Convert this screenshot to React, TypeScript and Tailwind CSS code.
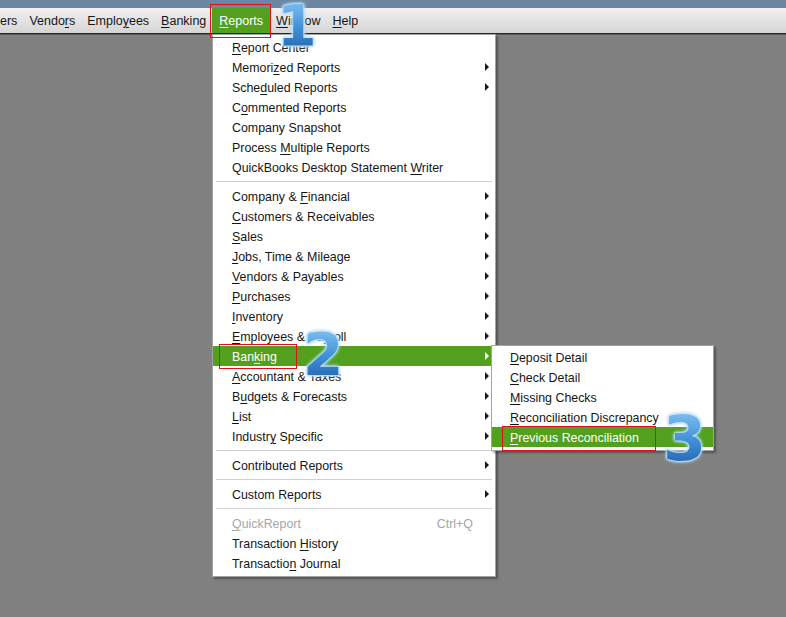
import React from 'react';

type Item =
  | { kind: 'item'; label: string; sub?: boolean; active?: boolean; disabled?: boolean; shortcut?: string }
  | { kind: 'sep' };

// "^" marks the mnemonic letter that gets underlined
const menuItems: Item[] = [
  { kind: 'item', label: '^Report Center' },
  { kind: 'item', label: 'Memori^zed Reports', sub: true },
  { kind: 'item', label: 'Sche^duled Reports', sub: true },
  { kind: 'item', label: 'C^ommented Reports' },
  { kind: 'item', label: 'Company Snapshot' },
  { kind: 'item', label: 'Process ^Multiple Reports' },
  { kind: 'item', label: 'QuickBooks Desktop Statement ^Writer' },
  { kind: 'sep' },
  { kind: 'item', label: 'Company & ^Financial', sub: true },
  { kind: 'item', label: '^Customers & Receivables', sub: true },
  { kind: 'item', label: '^Sales', sub: true },
  { kind: 'item', label: '^Jobs, Time & Mileage', sub: true },
  { kind: 'item', label: '^Vendors & Payables', sub: true },
  { kind: 'item', label: '^Purchases', sub: true },
  { kind: 'item', label: '^Inventory', sub: true },
  { kind: 'item', label: '^Employees & Payroll', sub: true },
  { kind: 'item', label: 'Ban^king', sub: true, active: true },
  { kind: 'item', label: '^Accountant & Taxes', sub: true },
  { kind: 'item', label: 'B^udgets & Forecasts', sub: true },
  { kind: 'item', label: '^List', sub: true },
  { kind: 'item', label: 'Industr^y Specific', sub: true },
  { kind: 'sep' },
  { kind: 'item', label: 'Contributed Reports', sub: true },
  { kind: 'sep' },
  { kind: 'item', label: 'Custom Reports', sub: true },
  { kind: 'sep' },
  { kind: 'item', label: '^QuickReport', disabled: true, shortcut: 'Ctrl+Q' },
  { kind: 'item', label: 'Transaction ^History' },
  { kind: 'item', label: 'Transactio^n Journal' },
];

const bankingItems = [
  { label: '^Deposit Detail' },
  { label: '^Check Detail' },
  { label: '^Missing Checks' },
  { label: '^Reconciliation Discrepancy' },
  { label: '^Previous Reconciliation', active: true },
];

const menuBar = [
  { label: 'ers' },
  { label: 'Vendo^rs' },
  { label: 'Emplo^yees' },
  { label: '^Banking' },
  { label: '^Reports', active: true },
  { label: '^Window' },
  { label: '^Help' },
];

function Label({ text }: { text: string }) {
  const i = text.indexOf('^');
  if (i < 0) return <span>{text}</span>;
  return (
    <span>
      {text.slice(0, i)}
      <span className="underline underline-offset-[2px] decoration-1">{text[i + 1]}</span>
      {text.slice(i + 2)}
    </span>
  );
}

function Arrow({ white }: { white?: boolean }) {
  return (
    <span
      className={
        'h-0 w-0 border-y-[4px] border-l-[4px] border-y-transparent ' +
        (white ? 'border-l-white' : 'border-l-[#1a1a1a]')
      }
    />
  );
}

function Badge({ n, className }: { n: string; className: string }) {
  return (
    <div
      className={
        'absolute font-bold leading-none bg-linear-to-b from-[#86c6f3] via-[#4293d8] to-[#205fa8] bg-clip-text text-transparent [filter:drop-shadow(0_0_1px_#e2f3ff)_drop-shadow(0_0_1px_#a9d6fb)_drop-shadow(0_0_1.5px_#a9d6fb)] ' +
        className
      }
      style={{ fontFamily: '"DejaVu Sans", sans-serif' }}
    >
      {n}
    </div>
  );
}

export default function App() {
  return (
    <div
      className="relative h-[617px] w-[786px] overflow-hidden bg-[#808080] text-[12.4px] text-[#161616]"
      style={{ fontFamily: '"Liberation Sans", Arial, sans-serif' }}
    >
      {/* title strip */}
      <div className="h-[8px] bg-[#6b87a1]" />

      {/* menu bar */}
      <div className="flex h-[25px] items-stretch bg-linear-to-b from-[#f1f1f1] to-[#d5d5d5] text-[12.5px]">
        {menuBar.map((m, idx) => (
          <div
            key={m.label}
            className={
              'flex items-center pt-[1px] ' +
              (idx === 0 ? 'pl-0 pr-[6px] ' : 'px-[6px] ') +
              (m.active ? 'bg-[#52a01e] px-[7px] text-white' : '')
            }
          >
            <Label text={m.label} />
          </div>
        ))}
      </div>
      <div className="h-[1px] bg-[#262626]" />
      <div className="h-[1px] bg-[#5a5a5a]" />

      {/* Reports dropdown */}
      <div className="absolute left-[212px] top-[34px] w-[284px] border border-[#a3a3a3] bg-white pb-[3px] pt-[2px] shadow-[2px_2px_2px_rgba(0,0,0,0.35)]">
        {menuItems.map((it, idx) =>
          it.kind === 'sep' ? (
            <div key={idx} className="flex h-[9px] items-center px-[3px]">
              <div className="h-[1px] w-full bg-[#d0d0d0]" />
            </div>
          ) : (
            <div
              key={idx}
              className={
                'flex h-[20px] items-center pl-[19px] pr-[6px] pt-[2px] ' +
                (it.active ? 'bg-[#52a01e] text-white ' : '') +
                (it.disabled ? 'text-[#a6a6a6]' : '')
              }
            >
              <Label text={it.label} />
              {it.shortcut && <span className="ml-auto mr-[16px]">{it.shortcut}</span>}
              {it.sub && (
                <span className="ml-auto flex -mt-[2px]">
                  <Arrow white={it.active} />
                </span>
              )}
            </div>
          )
        )}
      </div>

      {/* Banking submenu */}
      <div className="absolute left-[491px] top-[345px] w-[223px] border border-[#a3a3a3] bg-white pb-[3px] pt-[1px] shadow-[2px_2px_2px_rgba(0,0,0,0.35)]">
        {bankingItems.map((it) => (
          <div
            key={it.label}
            className={'flex h-[20px] items-center pl-[18px] pt-[2px] ' + (it.active ? 'bg-[#52a01e] text-white' : '')}
          >
            <Label text={it.label} />
          </div>
        ))}
      </div>

      {/* red annotation boxes */}
      <div className="absolute left-[210px] top-[4px] h-[34px] w-[61px] border border-[#e0101a]" />
      <div className="absolute left-[219px] top-[344px] h-[25px] w-[78px] border border-[#e0101a]" />
      <div className="absolute left-[502px] top-[426px] h-[25px] w-[154px] border border-[#e0101a]" />

      {/* step numbers */}
      <Badge n="1" className="left-[277px] top-[-2px] text-[57px]" />
      <Badge n="2" className="left-[303px] top-[326px] text-[58px]" />
      <Badge n="3" className="left-[663px] top-[408px] text-[62px]" />
    </div>
  );
}
